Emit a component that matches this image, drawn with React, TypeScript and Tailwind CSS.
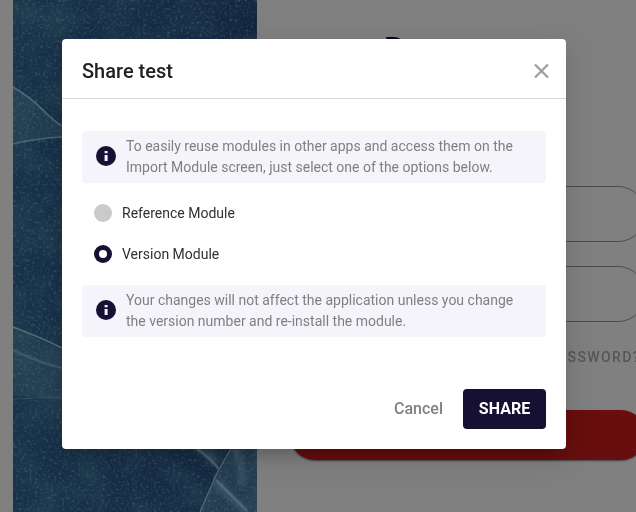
import React from 'react';

function Backdrop() {
  return (
    <svg className="block h-[512px] w-[244px] shrink-0" viewBox="13 0 244 512" preserveAspectRatio="none">
      <defs>
        <linearGradient id="base" x1="0" y1="0" x2="1" y2="0">
          <stop offset="0" stopColor="#17324a" />
          <stop offset="0.6" stopColor="#162d46" />
          <stop offset="1" stopColor="#13263e" />
        </linearGradient>
        <filter id="clouds" x="0" y="0" width="100%" height="100%" colorInterpolationFilters="sRGB">
          <feTurbulence type="fractalNoise" baseFrequency="0.028" numOctaves="5" seed="8" />
          <feColorMatrix values="0 0 0 0 0.16  0 0 0 0 0.28  0 0 0 0 0.34  1.8 0 0 0 -0.68" />
        </filter>
        <filter id="grain" x="0" y="0" width="100%" height="100%" colorInterpolationFilters="sRGB">
          <feTurbulence type="fractalNoise" baseFrequency="0.37" numOctaves="2" seed="3" />
          <feColorMatrix values="0 0 0 0 0.38  0 0 0 0 0.47  0 0 0 0 0.53  2 0.8 0 0 -1.4" />
        </filter>
        <filter id="soft" x="-20%" y="-20%" width="140%" height="140%">
          <feGaussianBlur stdDeviation="0.7" />
        </filter>
        <filter id="wide" x="-30%" y="-30%" width="160%" height="160%">
          <feGaussianBlur stdDeviation="3" />
        </filter>
      </defs>
      <rect x="13" width="244" height="512" fill="url(#base)" />
      <rect x="13" width="244" height="512" filter="url(#clouds)" opacity=".7" />
      <path d="M13 88 L30 99 L62 127 L62 137 L13 144Z M13 327 L62 350 L62 400 L13 395Z" fill="#45636e" opacity=".25" filter="url(#soft)" />
      <path d="M232 449 L257 449 L257 512 L200 512 L217 475Z" fill="#426270" opacity=".35" filter="url(#soft)" />
      <path d="M195 447 Q210 454 217 464 M235 447 Q244 466 242 486 M216 482 L246 512" fill="none" stroke="#66808a" strokeWidth="5" opacity=".5" filter="url(#wide)" />
      <g fill="none" stroke="#526b75" filter="url(#soft)">
        <path d="M13 87 Q31 98 43 110 T62 126" strokeWidth="1.5" />
        <path d="M13 144 Q38 138 62 137" strokeWidth="1.3" opacity=".8" />
        <path d="M13 327 Q42 338 62 348" strokeWidth="1.5" />
        <path d="M13 350 Q40 363 62 368" strokeWidth="2.5" opacity=".5" />
        <path d="M13 399 L62 397" opacity=".4" />
        <path d="M232 447 L218 471 L200 512" strokeWidth="1.3" />
        <path d="M197 449 Q209 457 218 468" strokeWidth="2.5" opacity=".8" />
        <path d="M216 480 L247 511" strokeWidth="2.5" opacity=".8" />
      </g>
      <rect x="13" width="244" height="512" filter="url(#grain)" opacity=".5" />
    </svg>
  );
}

function LoginPage() {
  return (
    <div className="flex h-[512px] w-[636px] overflow-hidden bg-[#808080]">
      <div className="w-[13px] shrink-0" />
      <Backdrop />
      <div className="w-[389px] shrink-0 pl-[33px]">
        <h1 className="h-[186px] pl-[94px] pt-[29px] text-[34px] leading-[40px] font-bold text-[#0b061f]">D</h1>
        <div className="h-[56px] rounded-full border border-[#4b4b4b]" />
        <div className="mt-[24px] h-[56px] rounded-full border border-[#4b4b4b]" />
        <p className="mt-[25px] pr-[5px] text-right text-[14px] leading-[20px] font-medium tracking-[1.4px] text-[#565656]">FORGOT PASSWORD?</p>
        <div className="mt-[43px] h-[50px] rounded-full bg-[#680e0e] shadow-[0_1px_2px_rgba(0,0,0,0.5)]" />
      </div>
    </div>
  );
}

function Notice({ children }: { children: React.ReactNode }) {
  return (
    <div className="flex h-[52px] items-center rounded-[4px] bg-[#f5f4fa] pl-3">
      <svg className="mr-2 size-6 shrink-0 -translate-y-px" viewBox="0 0 24 24">
        <circle cx="12" cy="12" r="10" fill="#161032" />
        <path d="M10.6 11h3v6h-3zM10.6 7h3v2.2h-3z" fill="#f5f4fa" />
      </svg>
      <p className="text-[14px] leading-[21px] whitespace-nowrap text-[#808080]">{children}</p>
    </div>
  );
}

function Option({ label, checked = false }: { label: string; checked?: boolean }) {
  return (
    <label className="flex h-[41px] items-center gap-[10px] pl-3 text-[14px] text-[#303030]">
      <span className={checked ? 'mb-px flex size-[18px] items-center justify-center rounded-full bg-[#161032]' : 'mb-px size-[18px] rounded-full bg-[#cacaca]'}>
        {checked && <span className="size-2 rounded-full bg-white" />}
      </span>
      {label}
    </label>
  );
}

export default function App() {
  return (
    <div className="relative h-[512px] w-[636px] overflow-hidden font-['Roboto',sans-serif]">
      <LoginPage />
      <div role="dialog" className="absolute top-[39px] left-[62px] flex h-[410px] w-[504px] flex-col rounded-[4px] bg-white shadow-[0_11px_15px_-7px_rgba(0,0,0,0.2),0_9px_30px_3px_rgba(0,0,0,0.12)]">
        <header className="flex h-[60px] items-center justify-between border-b border-[#d6d6d6] pt-[5px] pr-[17px] pl-5">
          <h2 className="text-[20px] leading-6 font-medium text-[#212121]">Share test</h2>
          <svg className="size-[15px]" viewBox="0 0 15 15" stroke="#9e9e9e" strokeWidth="2.2">
            <path d="M1 .5l13 13M14 .5L1 13.5" />
          </svg>
        </header>
        <main className="flex-1 px-5 pt-8">
          <Notice>To easily reuse modules in other apps and access them on the<br />Import Module screen, just select one of the options below.</Notice>
          <div className="h-[102px] pt-[10px]">
            <Option label="Reference Module" />
            <Option label="Version Module" checked />
          </div>
          <Notice>Your changes will not affect the application unless you change<br />the version number and re-install the module.</Notice>
        </main>
        <footer className="flex items-center justify-end gap-5 px-5 pb-5">
          <button className="text-[16px] leading-6 font-medium text-[#808080]">Cancel</button>
          <button className="h-10 w-[83px] rounded-[4px] bg-[#161032] text-[16px] font-bold text-white">SHARE</button>
        </footer>
      </div>
    </div>
  );
}
